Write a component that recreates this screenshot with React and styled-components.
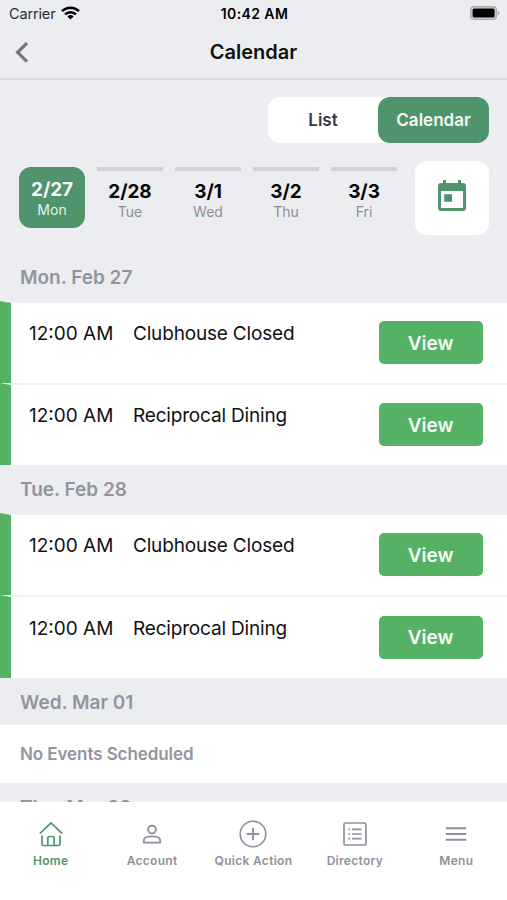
import React, { useState } from "react";
import styled, { createGlobalStyle } from "styled-components";

const days = [
  { date: "2/27", day: "Mon" },
  { date: "2/28", day: "Tue" },
  { date: "3/1", day: "Wed" },
  { date: "3/2", day: "Thu" },
  { date: "3/3", day: "Fri" },
];

const groups = [
  {
    title: "Mon. Feb 27",
    events: [
      { time: "12:00 AM", name: "Clubhouse Closed" },
      { time: "12:00 AM", name: "Reciprocal Dining" },
    ],
  },
  {
    title: "Tue. Feb 28",
    events: [
      { time: "12:00 AM", name: "Clubhouse Closed" },
      { time: "12:00 AM", name: "Reciprocal Dining" },
    ],
  },
  { title: "Wed. Mar 01", events: [] },
  { title: "Thu. Mar 02", events: [] },
];

const tabs = [
  { label: "Home", Icon: HomeIcon },
  { label: "Account", Icon: AccountIcon },
  { label: "Quick Action", Icon: PlusIcon },
  { label: "Directory", Icon: DirectoryIcon },
  { label: "Menu", Icon: MenuIcon },
];

export default function App() {
  const [view, setView] = useState("Calendar");
  const [selected, setSelected] = useState("2/27");
  const [tab, setTab] = useState("Home");

  return (
    <Screen>
      <GlobalStyle />
      <StatusBar>
        <Carrier>
          Carrier
          <WifiIcon />
        </Carrier>
        <Clock>10:42 AM</Clock>
        <BatteryIcon />
      </StatusBar>
      <Header>
        <BackButton aria-label="Back">
          <svg width="14" height="22" viewBox="0 0 14 22" fill="none">
            <path d="M12 1 2.6 10.3l9.4 9.4" stroke="#77787b" strokeWidth="3.2" />
          </svg>
        </BackButton>
        <Title>Calendar</Title>
      </Header>
      <ToggleRow>
        <Toggle>
          {["List", "Calendar"].map((name) => (
            <ToggleButton
              key={name}
              $active={view === name}
              onClick={() => setView(name)}
            >
              {name}
            </ToggleButton>
          ))}
        </Toggle>
      </ToggleRow>
      <DateRow>
        <DayList>
          {days.map(({ date, day }) => (
            <DayButton
              key={date}
              $active={selected === date}
              onClick={() => setSelected(date)}
            >
              <DayDate>{date}</DayDate>
              <DayName $active={selected === date}>{day}</DayName>
            </DayButton>
          ))}
        </DayList>
        <PickerButton aria-label="Pick a date">
          <CalendarIcon />
        </PickerButton>
      </DateRow>
      <Agenda>
        {groups.map(({ title, events }) => (
          <section key={title}>
            <GroupTitle>{title}</GroupTitle>
            {events.map(({ time, name }) => (
              <EventRow key={name}>
                <EventTime>{time}</EventTime>
                <EventName>{name}</EventName>
                <ViewButton>View</ViewButton>
              </EventRow>
            ))}
            {events.length === 0 && <Empty>No Events Scheduled</Empty>}
          </section>
        ))}
      </Agenda>
      <TabBar>
        {tabs.map(({ label, Icon }) => (
          <TabButton
            key={label}
            $active={tab === label}
            onClick={() => setTab(label)}
          >
            <Icon />
            <span>{label}</span>
          </TabButton>
        ))}
      </TabBar>
    </Screen>
  );
}

function WifiIcon() {
  return (
    <svg width="19" height="14" viewBox="0 0 19 14" fill="none">
      <g stroke="#000" strokeWidth="2.5">
        <path d="M1 5.1a12.2 12.2 0 0 1 17 0" />
        <path d="M4.1 8.4a7.7 7.7 0 0 1 10.8 0" />
      </g>
      <path d="M6.4 10.4a4.4 4.4 0 0 1 6.2 0L9.5 13.6z" fill="#000" />
    </svg>
  );
}

function BatteryIcon() {
  return (
    <svg width="30" height="15" viewBox="0 0 30 15">
      <rect x=".8" y=".8" width="25.6" height="12.6" rx="3.4" fill="#d5d6d8" stroke="#a9aaac" strokeWidth="1.4" />
      <rect x="2.6" y="2.6" width="22" height="9" rx="1.6" fill="#000" />
      <path d="M27.7 4.9c2.4.8 2.4 3.7 0 4.5z" fill="#a9aaac" />
    </svg>
  );
}

function CalendarIcon() {
  return (
    <svg width="28" height="31" viewBox="0 0 28 31" fill="#4f946c">
      <path d="M5 0h3v3h12V0h3v3h2a3 3 0 0 1 3 3v22a3 3 0 0 1-3 3H3a3 3 0 0 1-3-3V6a3 3 0 0 1 3-3h2zM3 11v17h22V11z" />
      <rect x="6.2" y="14.2" width="7.8" height="7.6" />
    </svg>
  );
}

function HomeIcon() {
  return (
    <svg width="24" height="26" viewBox="0 0 24 26" fill="none" stroke="currentColor" strokeWidth="1.7" strokeLinejoin="round" strokeLinecap="round">
      <path d="M1.3 12.1 12 1.9l10.7 10.2" />
      <path d="M3 15.2v7.8a1.5 1.5 0 0 0 1.5 1.5h15a1.5 1.5 0 0 0 1.5-1.5v-7.8" />
      <path d="M8.8 24.3v-7.2a1.6 1.6 0 0 1 1.6-1.6h3.2a1.6 1.6 0 0 1 1.6 1.6v7.2" />
    </svg>
  );
}

function AccountIcon() {
  return (
    <svg width="20" height="26" viewBox="0 0 20 26" fill="none" stroke="currentColor" strokeWidth="1.9">
      <circle cx="10" cy="8.5" r="3.9" />
      <path d="M1.8 21.6v-2.2c0-2.5 3.4-4 8.2-4s8.2 1.5 8.2 4v2.2z" strokeLinejoin="round" />
    </svg>
  );
}

function PlusIcon() {
  return (
    <svg width="28" height="28" viewBox="0 0 28 28" fill="none" stroke="currentColor" strokeWidth="1.6">
      <circle cx="14" cy="14" r="12.8" />
      <path d="M14 7.7v12.6M7.7 14h12.6" strokeWidth="1.9" />
    </svg>
  );
}

function DirectoryIcon() {
  return (
    <svg width="24" height="24" viewBox="0 0 24 24" fill="none" stroke="currentColor" strokeWidth="1.7">
      <rect x="1" y="1" width="22" height="22" rx="1.4" />
      <path d="M9 7.3h9.6M9 12h9.6M9 16.7h9.6M5.4 7.3h1.8M5.4 12h1.8M5.4 16.7h1.8" />
    </svg>
  );
}

function MenuIcon() {
  return (
    <svg width="22" height="16" viewBox="0 0 22 16" stroke="currentColor" strokeWidth="2">
      <path d="M.8 2.2h20.4M.8 8h20.4M.8 13.8h20.4" />
    </svg>
  );
}

const GlobalStyle = createGlobalStyle`
  *, *::before, *::after {
    box-sizing: border-box;
  }
  body {
    margin: 0;
    overflow: hidden;
  }
  button {
    border: 0;
    padding: 0;
    background: none;
    color: inherit;
    font: inherit;
    letter-spacing: inherit;
    cursor: pointer;
  }
  svg {
    display: block;
    flex: none;
  }
`;
const Screen = styled.div`
  display: flex;
  flex-direction: column;
  height: 900px;
  overflow: hidden;
  background-color: #ecedf1;
  color: #101113;
  font-family: Inter, "Liberation Sans", sans-serif;
`;
const StatusBar = styled.div`
  flex: none;
  display: grid;
  grid-template-columns: 1fr auto 1fr;
  align-items: center;
  height: 27px;
  padding: 0 7px 0 9px;
  color: #000;
  font-size: 14px;
  > svg {
    justify-self: end;
    margin-top: -1px;
  }
`;
const Carrier = styled.div`
  display: flex;
  align-items: center;
  gap: 6px;
  font-size: 14.5px;
  letter-spacing: -0.15px;
  color: #2b2c2e;
  svg {
    margin-top: -2px;
  }
`;
const Clock = styled.div`
  font-weight: 600;
  letter-spacing: 0.4px;
`;
const Header = styled.header`
  flex: none;
  display: grid;
  grid-template-columns: 1fr auto 1fr;
  align-items: center;
  height: 53px;
  padding: 0 15px;
  border-bottom: 2px solid #dddee1;
`;
const BackButton = styled.button`
  justify-self: start;
`;
const Title = styled.h1`
  margin: 0 0 1px;
  font-size: 20px;
  font-weight: 600;
`;
const ToggleRow = styled.div`
  flex: none;
  display: flex;
  justify-content: flex-end;
  padding: 17px 18px 18px;
`;
const Toggle = styled.div`
  display: flex;
  border-radius: 12px;
  background-color: #fff;
`;
const ToggleButton = styled.button`
  width: ${({ $active }) => ($active ? "111px" : "110px")};
  height: 46px;
  border-radius: 12px;
  background-color: ${({ $active }) => ($active ? "#4f946c" : "transparent")};
  color: ${({ $active }) => ($active ? "#f4fbf2" : "#363744")};
  font-size: 17px;
  font-weight: 600;
`;
const DateRow = styled.div`
  flex: none;
  display: flex;
  justify-content: space-between;
  padding: 0 18px 0 19px;
`;
const DayList = styled.div`
  display: flex;
  gap: 12px;
  padding-top: 6px;
`;
const DayButton = styled.button`
  display: flex;
  flex-direction: column;
  align-items: center;
  width: 66px;
  height: 61px;
  padding-top: ${({ $active }) => ($active ? "10px" : "8px")};
  border-top: ${({ $active }) => ($active ? "0" : "4px solid #d1d2d6")};
  border-radius: ${({ $active }) => ($active ? "12px" : "0")};
  background-color: ${({ $active }) => ($active ? "#4f946c" : "transparent")};
  color: ${({ $active }) => ($active ? "#f6fcf5" : "#050505")};
`;
const DayDate = styled.span`
  font-size: 19px;
  font-weight: 700;
  letter-spacing: -0.1px;
  line-height: 25px;
`;
const DayName = styled.span`
  margin-top: -1px;
  font-size: 14px;
  line-height: 18px;
  color: ${({ $active }) => ($active ? "#e6f4e8" : "#8d8e94")};
`;
const PickerButton = styled.button`
  display: flex;
  justify-content: center;
  align-items: center;
  width: 74px;
  height: 74px;
  border-radius: 12px;
  background-color: #fff;
  svg {
    margin-bottom: 5px;
  }
`;
const Agenda = styled.main`
  flex: 1;
  min-height: 0;
  padding-top: 18px;
  overflow: hidden;
`;
const GroupTitle = styled.h2`
  height: 47.7px;
  margin: 0;
  padding-left: 20px;
  color: #92949e;
  font-size: 19px;
  font-weight: 600;
  line-height: 49px;
`;
/* the light top border meets the green left one at a slant */
const EventRow = styled.div`
  display: flex;
  align-items: flex-start;
  height: 82.3px;
  padding: 0 24.5px 0 18px;
  border-top: 2px solid #f3f3f5;
  border-left: 11px solid #55b264;
  background-color: #fff;
  font-size: 19px;
  line-height: 24px;
  ${GroupTitle} + & {
    border-top-color: #edeef2;
  }
`;
const EventTime = styled.span`
  width: 104px;
  padding-top: 19.5px;
`;
const EventName = styled.span`
  flex: 1;
  padding-top: 19.5px;
  letter-spacing: -0.18px;
`;
const ViewButton = styled.button`
  width: 104px;
  height: 43px;
  margin-top: 18.5px;
  padding-top: 2px;
  border-radius: 5px;
  background-color: #55b264;
  color: #f8fdf7;
  font-size: 19px;
  font-weight: 600;
`;
const Empty = styled.div`
  height: 58px;
  padding-left: 20px;
  background-color: #fff;
  color: #92949e;
  font-size: 17px;
  font-weight: 600;
  letter-spacing: -0.08px;
  line-height: 59px;
`;
const TabBar = styled.nav`
  flex: none;
  display: grid;
  grid-template-columns: repeat(5, 1fr);
  height: 98px;
  background-color: #fff;
`;
const TabButton = styled.button`
  display: grid;
  grid-template-rows: 28px 18px;
  align-content: start;
  align-items: center;
  justify-items: center;
  row-gap: 3px;
  padding-top: 18px;
  color: ${({ $active }) => ($active ? "#4f946c" : "#8f919a")};
  font-size: 12px;
  font-weight: 600;
  letter-spacing: 0.3px;
  white-space: nowrap;
`;
